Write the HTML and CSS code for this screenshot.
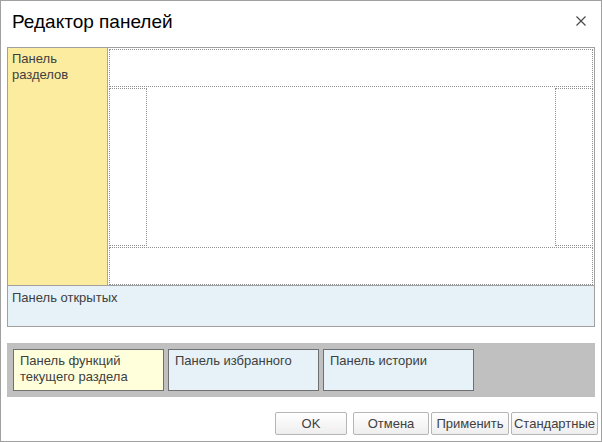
FILE: index.html
```html
<!DOCTYPE html>
<html lang="ru">
<head>
<meta charset="utf-8">
<title>Редактор панелей</title>
<link rel="stylesheet" href="styles.css">
</head>
<body>
<div class="window">
  <div class="titlebar">
    <div class="title">Редактор панелей</div>
    <svg class="close" width="10" height="10" viewBox="0 0 10 10"><path d="M0.5 0.5L9.5 9.5M9.5 0.5L0.5 9.5" stroke="#4a4a4a" stroke-width="1.2" fill="none"/></svg>
  </div>
  <div class="frame">
    <div class="upper">
      <div class="sections">Панель<br>разделов</div>
      <div class="canvas">
        <div class="slot slot-h"></div>
        <div class="middle">
          <div class="slot slot-v"></div>
          <div class="center"></div>
          <div class="slot slot-v"></div>
        </div>
        <div class="slot slot-h"></div>
      </div>
    </div>
    <div class="opened">Панель открытых</div>
  </div>
  <div class="band">
    <div class="chip chip-yellow">Панель функций<br>текущего раздела</div>
    <div class="chip chip-blue">Панель избранного</div>
    <div class="chip chip-blue">Панель истории</div>
  </div>
  <div class="buttons">
    <button class="btn btn-ok">OK</button>
    <button class="btn btn-cancel">Отмена</button>
    <button class="btn btn-apply">Применить</button>
    <button class="btn btn-std">Стандартные</button>
  </div>
</div>
</body>
</html>
```
FILE: styles.css
```css
* { box-sizing: border-box; }
html, body { margin: 0; padding: 0; background: #fff; }
body { font-family: "Liberation Sans", Arial, sans-serif; font-size: 13px; color: #404040; }
.window {
  width: 602px; height: 442px;
  border: 1px solid #a0a0a0;
  background: #fff;
  display: flex; flex-direction: column;
}
.titlebar {
  height: 46px; flex: none;
  display: flex; align-items: flex-start; justify-content: space-between;
  padding: 8px 15px 0 11px;
}
.title { font-size: 19px; color: #000; line-height: 25px; }
.close { margin-top: 7px; }
.frame {
  margin: 0 6px; height: 280px; flex: none;
  border: 1px solid #a0a0a0;
  display: flex; flex-direction: column;
}
.upper { height: 237px; display: flex; flex: none; }
.sections {
  width: 100px; flex: none;
  background: #fcec9f;
  border-right: 1px solid #b9ab6c;
  padding: 3px 4px;
  line-height: 16px;
}
.canvas {
  flex: 1; padding: 1px 1px 0 1px;
  display: flex; flex-direction: column; gap: 1px;
}
.slot { border: 1px dotted #909090; }
.slot-h { height: 38px; flex: none; }
.middle { height: 158px; flex: none; display: flex; }
.slot-v { width: 38px; flex: none; }
.center { flex: 1; }
.opened {
  flex: 1;
  border-top: 1px solid #a0a0a0;
  background: #e6f2f8;
  padding: 4px 4px;
  line-height: 16px;
}
.band {
  margin: 16px 6px 0 6px; height: 54px; flex: none;
  background: #c0c0c0;
  display: flex; gap: 4px;
  padding: 6px 6px;
}
.chip {
  width: 151px; height: 42px;
  border: 1px solid #707070;
  padding: 3px 6px;
  line-height: 16px;
}
.chip-yellow { background: #ffffdc; }
.chip-blue { background: #e6f2f8; }
.buttons {
  margin-top: 15px; height: 23px; flex: none;
  display: flex; justify-content: flex-end; padding-right: 3px;
}
.btn {
  font-family: inherit; font-size: 13px; color: #404040;
  height: 23px; padding: 0;
  border: 1px solid #b5b5b5; border-radius: 2px;
  background: linear-gradient(#ffffff, #eeeeee);
  margin-left: 2px;
}
.btn-ok { width: 72px; margin-left: 0; }
.btn-cancel { width: 76px; margin-left: 6px; }
.btn-apply { width: 78px; }
.btn-std { width: 87px; }
```
